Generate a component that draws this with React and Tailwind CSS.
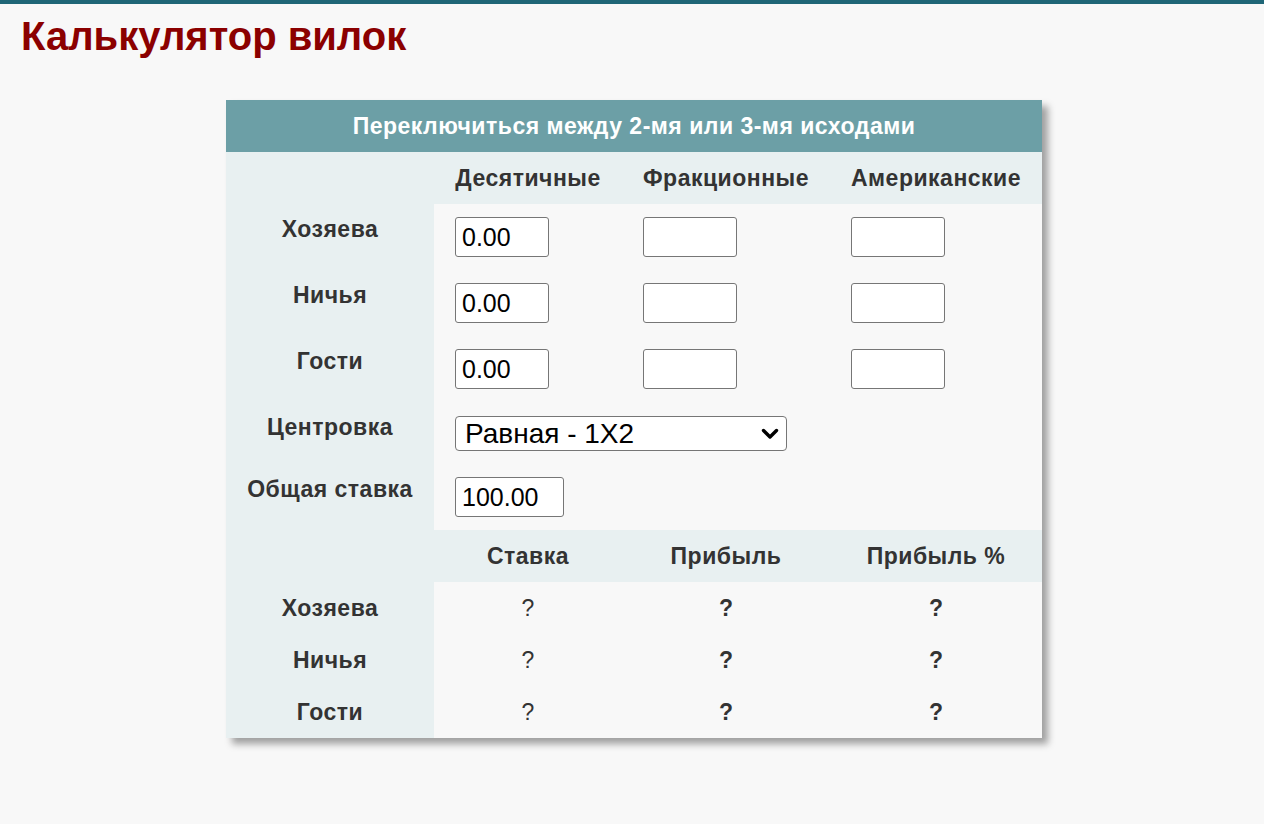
import React from "react";

const COLS = "grid grid-cols-[208px_188px_208px_212px]";
const LEFT = "bg-[#e8f0f1]";

function Input({ value, w = "w-[94px]" }) {
  return (
    <input
      type="text"
      defaultValue={value}
      className={`${w} h-[40px] border border-[#767676] rounded-[3px] bg-white text-[25px] leading-none px-[6px] text-black outline-none`}
    />
  );
}

function Label({ children, pt = "pt-[14px]" }) {
  return (
    <div className={`${LEFT} ${pt} text-center text-[23px] tracking-[0.5px] leading-[23px] font-bold text-[#333]`}>
      {children}
    </div>
  );
}

function InputRow({ label, val }) {
  return (
    <div className={`${COLS} h-[66px]`}>
      <Label>{label}</Label>
      <div className="pt-[13px] pl-[21px]">
        <Input value={val} />
      </div>
      <div className="pt-[13px] pl-[21px]">
        <Input value="" />
      </div>
      <div className="pt-[13px] pl-[21px]">
        <Input value="" />
      </div>
    </div>
  );
}

function ResultRow({ label }) {
  return (
    <div className={`${COLS} h-[52px] text-[23px] text-[#333]`}>
      <div className={`${LEFT} flex items-center justify-center font-bold tracking-[0.5px]`}>{label}</div>
      <div className="flex items-center justify-center">?</div>
      <div className="flex items-center justify-center font-bold">?</div>
      <div className="flex items-center justify-center font-bold">?</div>
    </div>
  );
}

export default function App() {
  return (
    <div
      className="min-h-[824px] bg-[#f8f8f8] border-t-4 border-[#1f6677]"
      style={{ fontFamily: '"Liberation Sans", Arial, sans-serif' }}
    >
      <h1 className="pl-[21px] pt-[10px] text-[40px] leading-[45px] font-bold text-[#8b0000]">
        Калькулятор вилок
      </h1>

      <div className="ml-[226px] mt-[41px] w-[816px] shadow-[6px_6px_7px_#a0a0a0]">
        <div className="h-[52px] bg-[#6c9fa6] flex items-center justify-center text-white text-[23px] tracking-[0.5px] font-bold">
          Переключиться между 2-мя или 3-мя исходами
        </div>

        <div className={`${COLS} h-[52px] bg-[#e8f0f1] text-[23px] tracking-[0.5px] font-bold text-[#333]`}>
          <div></div>
          <div className="flex items-center justify-center">Десятичные</div>
          <div className="flex items-center justify-center">Фракционные</div>
          <div className="flex items-center justify-center">Американские</div>
        </div>

        <InputRow label="Хозяева" val="0.00" />
        <InputRow label="Ничья" val="0.00" />
        <InputRow label="Гости" val="0.00" />

        <div className={`${COLS} h-[62px]`}>
          <Label>Центровка</Label>
          <div className="col-span-3 pt-[14px] pl-[21px]">
            <div className="relative w-[332px] h-[35px]">
              <select
                defaultValue="eq"
                className="appearance-none w-[332px] h-[35px] border border-[#767676] rounded-[4px] bg-white text-[28px] leading-none pl-[9px] py-0 text-black outline-none"
              >
                <option value="eq">Равная - 1X2</option>
              </select>
              <svg
                className="absolute right-[8px] top-[12px] pointer-events-none"
                width="18"
                height="12"
                viewBox="0 0 18 12"
              >
                <polyline
                  points="2.5,2.5 9,9 15.5,2.5"
                  fill="none"
                  stroke="#000"
                  strokeWidth="3.4"
                  strokeLinecap="round"
                  strokeLinejoin="round"
                />
              </svg>
            </div>
          </div>
        </div>

        <div className={`${COLS} h-[66px]`}>
          <Label>Общая ставка</Label>
          <div className="col-span-3 pt-[13px] pl-[21px]">
            <Input value="100.00" w="w-[109px]" />
          </div>
        </div>

        <div className={`${COLS} h-[52px] bg-[#e8f0f1] text-[23px] tracking-[0.5px] font-bold text-[#333]`}>
          <div></div>
          <div className="flex items-center justify-center">Ставка</div>
          <div className="flex items-center justify-center">Прибыль</div>
          <div className="flex items-center justify-center">Прибыль %</div>
        </div>

        <ResultRow label="Хозяева" />
        <ResultRow label="Ничья" />
        <ResultRow label="Гости" />
      </div>
    </div>
  );
}
